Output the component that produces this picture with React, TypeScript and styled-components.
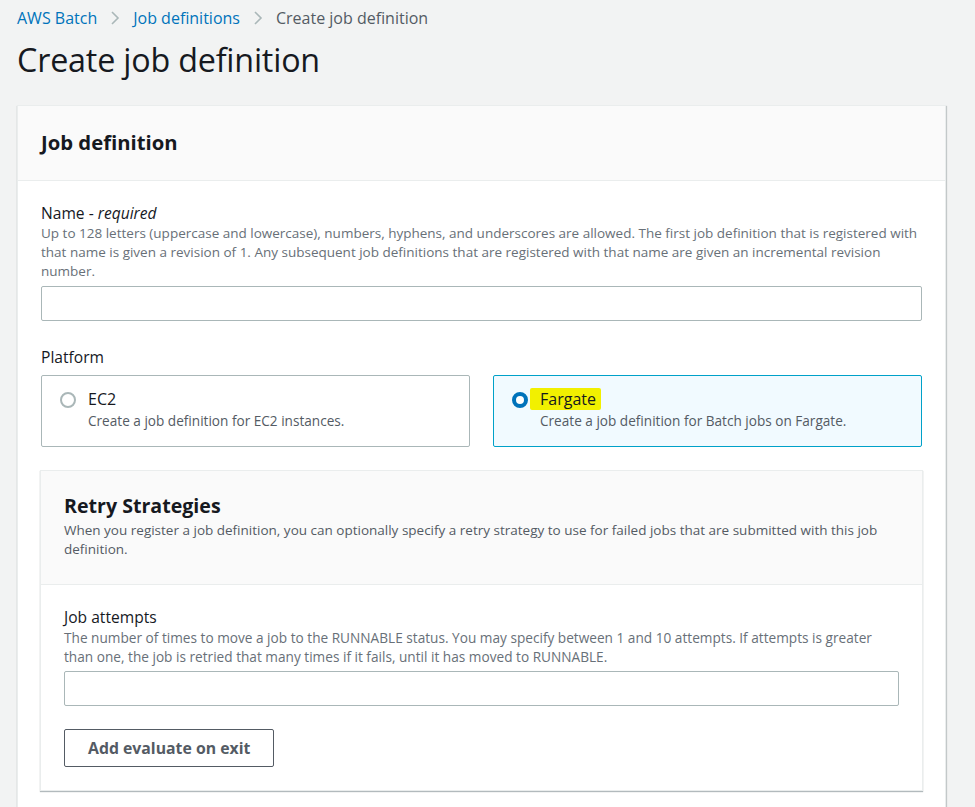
import React from 'react';
import styled, { createGlobalStyle } from 'styled-components';

const GlobalStyle = createGlobalStyle`
    html, body {
        margin: 0;
        padding: 0;
        background: #f2f3f3;
        font-family: "Open Sans", "Liberation Sans", sans-serif;
        color: #16191f;
    }
`;

const Page = styled.div`
    width: 975px;
    height: 807px;
    overflow: hidden;
    padding: 0 0 0 17px;
    box-sizing: border-box;
`;

const Breadcrumbs = styled.nav`
    display: flex;
    align-items: center;
    height: 35px;
    font-size: 16px;
    gap: 11px;
`;

const Crumb = styled.a<{ $current?: boolean }>`
    color: ${({ $current }) => ($current ? '#545b64' : '#0073bb')};
    text-decoration: none;
`;

const Chevron = styled.svg`
    width: 10px;
    height: 16px;
    margin: 0 2px;
`;

const Title = styled.h1`
    margin: 4px 0 0;
    font-size: 32.3px;
    font-weight: 400;
    line-height: 40px;
    letter-spacing: -0.2px;
`;

const Card = styled.section`
    margin-top: 26px;
    width: 927px;
    background: #fff;
    border: 1px solid #eaeded;
    box-shadow: 0 1px 1px 0 rgba(0, 28, 36, 0.3), 1px 1px 1px 0 rgba(0, 28, 36, 0.15);
`;

const CardHeader = styled.header`
    background: #fafafa;
    border-bottom: 1px solid #eaeded;
    padding: 21px 23px 23px;
`;

const CardTitle = styled.h2`
    margin: 0;
    font-size: 20.3px;
    font-weight: 700;
    line-height: 30px;
`;

const CardBody = styled.div`
    padding: 21px 23px 20px;
`;

const Field = styled.div`
    display: flex;
    flex-direction: column;
`;

const Label = styled.label`
    font-size: 15.6px;
    line-height: 22px;
    color: #16191f;

    em {
        font-style: italic;
    }
`;

const Hint = styled.div<{ $size?: number }>`
    font-size: ${({ $size }) => $size ?? 13.5}px;
    line-height: 19px;
    color: #687078;
`;

const TextInput = styled.input`
    box-sizing: border-box;
    height: 35px;
    margin-top: 5px;
    border: 1px solid #aab7b8;
    border-radius: 2px;
    background: #fff;
    font: inherit;
`;

const PlatformField = styled(Field)`
    margin-top: 25px;
`;

const Tiles = styled.div`
    display: grid;
    grid-template-columns: 1fr 1fr;
    gap: 23px;
    margin-top: 7px;
`;

const Tile = styled.div<{ $selected?: boolean }>`
    box-sizing: border-box;
    height: 72px;
    display: flex;
    align-items: flex-start;
    padding: 13px 18px;
    border: 1px solid ${({ $selected }) => ($selected ? '#00a1c9' : '#aab7b8')};
    border-radius: 2px;
    background: ${({ $selected }) => ($selected ? '#f1faff' : '#fff')};
`;

const Radio = styled.span<{ $checked?: boolean }>`
    flex: none;
    box-sizing: border-box;
    width: 16px;
    height: 16px;
    margin-top: 3px;
    margin-right: 12px;
    border-radius: 50%;
    background: #fff;
    border: ${({ $checked }) => ($checked ? '4.5px solid #0073bb' : '2px solid #aab7b8')};
`;

const TileText = styled.div`
    display: flex;
    flex-direction: column;
`;

const TileTitle = styled.span`
    font-size: 16px;
    line-height: 21px;
    color: #16191f;
`;

const Highlight = styled.mark`
    background: #f2f000;
    color: #16191f;
    padding: 0 5px 0 10px;
    margin-left: -10px;
    border-radius: 2px;
`;

const TileDesc = styled.span`
    font-size: 13.6px;
    line-height: 21px;
    color: #545b64;
`;

const SubCard = styled.section`
    margin: 23px -1px 0;
    border: 1px solid #eaeded;
    box-shadow: 0 1px 1px 0 rgba(0, 28, 36, 0.3);
    background: #fff;
`;

const SubHeader = styled.header`
    background: #fafafa;
    border-bottom: 1px solid #eaeded;
    padding: 20px 23px 25px;
`;

const SubTitle = styled.h3`
    margin: 0;
    font-size: 19.6px;
    font-weight: 700;
    line-height: 30px;
`;

const SubDesc = styled.div`
    font-size: 13.5px;
    line-height: 19px;
    color: #545b64;
`;

const SubBody = styled.div`
    padding: 21px 23px 23px;
`;

const Button = styled.button`
    margin-top: 23px;
    height: 38px;
    padding: 0 23px;
    background: #fff;
    border: 1px solid #545b64;
    border-radius: 2px;
    color: #545b64;
    font-family: inherit;
    font-size: 15.8px;
    font-weight: 700;
    cursor: pointer;
`;

const Sep = () => (
    <Chevron viewBox="0 0 10 16">
        <path d="M2 2l6 6-6 6" fill="none" stroke="#aab7b8" strokeWidth="1.6" />
    </Chevron>
);

const App = () => (
    <Page>
        <GlobalStyle />
        <Breadcrumbs>
            <Crumb href="#">AWS Batch</Crumb>
            <Sep />
            <Crumb href="#">Job definitions</Crumb>
            <Sep />
            <Crumb $current>Create job definition</Crumb>
        </Breadcrumbs>
        <Title>Create job definition</Title>

        <Card>
            <CardHeader>
                <CardTitle>Job definition</CardTitle>
            </CardHeader>
            <CardBody>
                <Field>
                    <Label>Name - <em>required</em></Label>
                    <Hint>
                        Up to 128 letters (uppercase and lowercase), numbers, hyphens, and underscores are allowed. The first job definition that is registered with that name is given a revision of 1. Any subsequent job definitions that are registered with that name are given an incremental revision number.
                    </Hint>
                    <TextInput type="text" />
                </Field>

                <PlatformField>
                    <Label>Platform</Label>
                    <Tiles>
                        <Tile>
                            <Radio />
                            <TileText>
                                <TileTitle>EC2</TileTitle>
                                <TileDesc>Create a job definition for EC2 instances.</TileDesc>
                            </TileText>
                        </Tile>
                        <Tile $selected>
                            <Radio $checked />
                            <TileText>
                                <TileTitle><Highlight>Fargate</Highlight></TileTitle>
                                <TileDesc>Create a job definition for Batch jobs on Fargate.</TileDesc>
                            </TileText>
                        </Tile>
                    </Tiles>
                </PlatformField>

                <SubCard>
                    <SubHeader>
                        <SubTitle>Retry Strategies</SubTitle>
                        <SubDesc>
                            When you register a job definition, you can optionally specify a retry strategy to use for failed jobs that are submitted with this job definition.
                        </SubDesc>
                    </SubHeader>
                    <SubBody>
                        <Field>
                            <Label>Job attempts</Label>
                            <Hint $size={13.65}>
                                The number of times to move a job to the RUNNABLE status. You may specify between 1 and 10 attempts. If attempts is greater than one, the job is retried that many times if it fails, until it has moved to RUNNABLE.
                            </Hint>
                            <TextInput type="text" />
                        </Field>
                        <Button>Add evaluate on exit</Button>
                    </SubBody>
                </SubCard>
            </CardBody>
        </Card>
    </Page>
);

export default App;
